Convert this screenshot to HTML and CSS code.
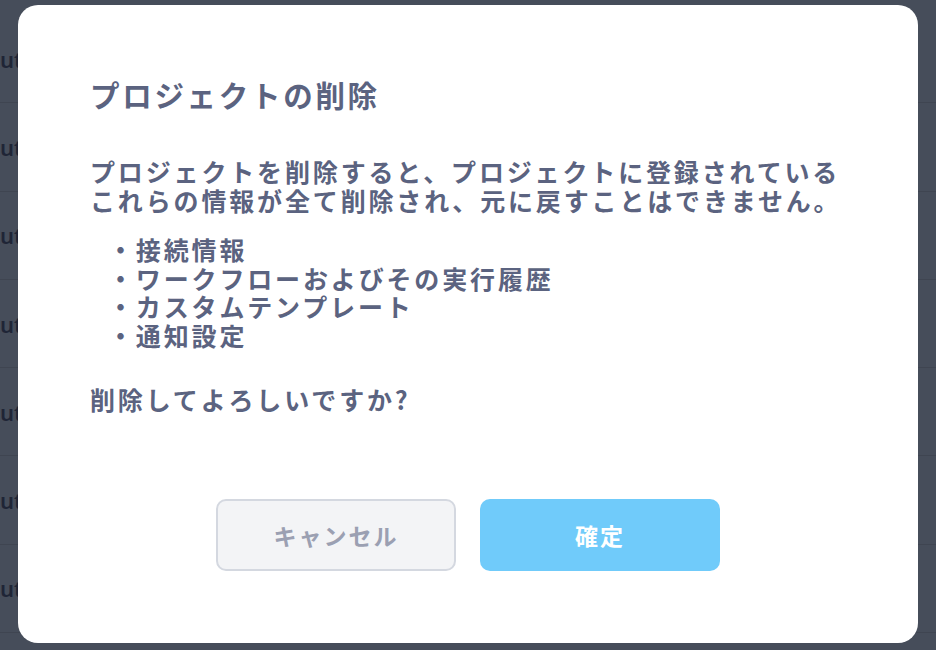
FILE: index.html
```html
<!DOCTYPE html>
<html lang="ja">
<head>
<meta charset="utf-8">
<title>プロジェクトの削除</title>
<link rel="stylesheet" href="styles.css">
</head>
<body>
<div class="page">
  <div class="row"><span class="cell">Output</span></div>
  <div class="row"><span class="cell">Output</span></div>
  <div class="row"><span class="cell">Output</span></div>
  <div class="row"><span class="cell">Output</span></div>
  <div class="row"><span class="cell">Output</span></div>
  <div class="row"><span class="cell">Output</span></div>
  <div class="row"><span class="cell">Output</span></div>
</div>
<div class="overlay">
  <div class="modal">
    <h2 class="title">プロジェクトの削除</h2>
    <p class="text">プロジェクトを削除すると、プロジェクトに登録されている<br>これらの情報が全て削除され、元に戻すことはできません。</p>
    <ul class="list">
      <li>・接続情報</li>
      <li>・ワークフローおよびその実行履歴</li>
      <li>・カスタムテンプレート</li>
      <li>・通知設定</li>
    </ul>
    <p class="text question">削除してよろしいですか?</p>
    <div class="actions">
      <button class="btn btn-cancel">キャンセル</button>
      <button class="btn btn-ok">確定</button>
    </div>
  </div>
</div>
</body>
</html>
```

FILE: styles.css
```css
html, body {
  margin: 0;
  padding: 0;
  height: 100%;
}
body {
  background: #464d5a;
  font-family: "Noto Sans CJK JP", "Noto Sans", sans-serif;
  overflow: hidden;
}
.page {
  display: flex;
  flex-direction: column;
  padding-top: 15px;
}
.row {
  height: 87.3px;
  border-bottom: 1px solid #3f4551;
  display: flex;
  align-items: center;
}
.cell {
  font-family: "Noto Sans", sans-serif;
  font-size: 22px;
  font-weight: 600;
  color: #1f2536;
  margin-left: -54px;
}
.overlay {
  position: fixed;
  inset: 0;
  display: flex;
  align-items: flex-start;
  justify-content: flex-start;
  padding: 5px 0 0 18px;
}
.modal {
  width: 900px;
  height: 638px;
  box-sizing: border-box;
  background: #ffffff;
  border-radius: 20px;
  padding: 71px 72px 72px 72px;
  display: flex;
  flex-direction: column;
  color: #5b6380;
}
.title {
  margin: 0;
  font-size: 29.5px;
  line-height: 36px;
  font-weight: 700;
  letter-spacing: 2.7px;
}
.text {
  margin: 45px 0 0 0;
  font-size: 25px;
  line-height: 28.5px;
  font-weight: 700;
  letter-spacing: 2.85px;
}
.list {
  list-style: none;
  margin: 21px 0 0 0;
  padding: 0 0 0 18px;
  font-size: 25px;
  line-height: 28.7px;
  font-weight: 700;
  letter-spacing: 2.85px;
}
.question {
  margin-top: 35px;
}
.actions {
  margin-top: auto;
  display: flex;
  justify-content: center;
  gap: 24px;
}
.btn {
  width: 240px;
  height: 72px;
  box-sizing: border-box;
  border-radius: 10px;
  font-family: "Noto Sans CJK JP", "Noto Sans", sans-serif;
  font-size: 23px;
  font-weight: 700;
  letter-spacing: 2px;
  cursor: pointer;
}
.btn-cancel {
  background: #f3f4f6;
  border: 2px solid #d4d8e0;
  color: #9ba0b2;
}
.btn-ok {
  background: #70cbfa;
  border: none;
  color: #ffffff;
}
```
